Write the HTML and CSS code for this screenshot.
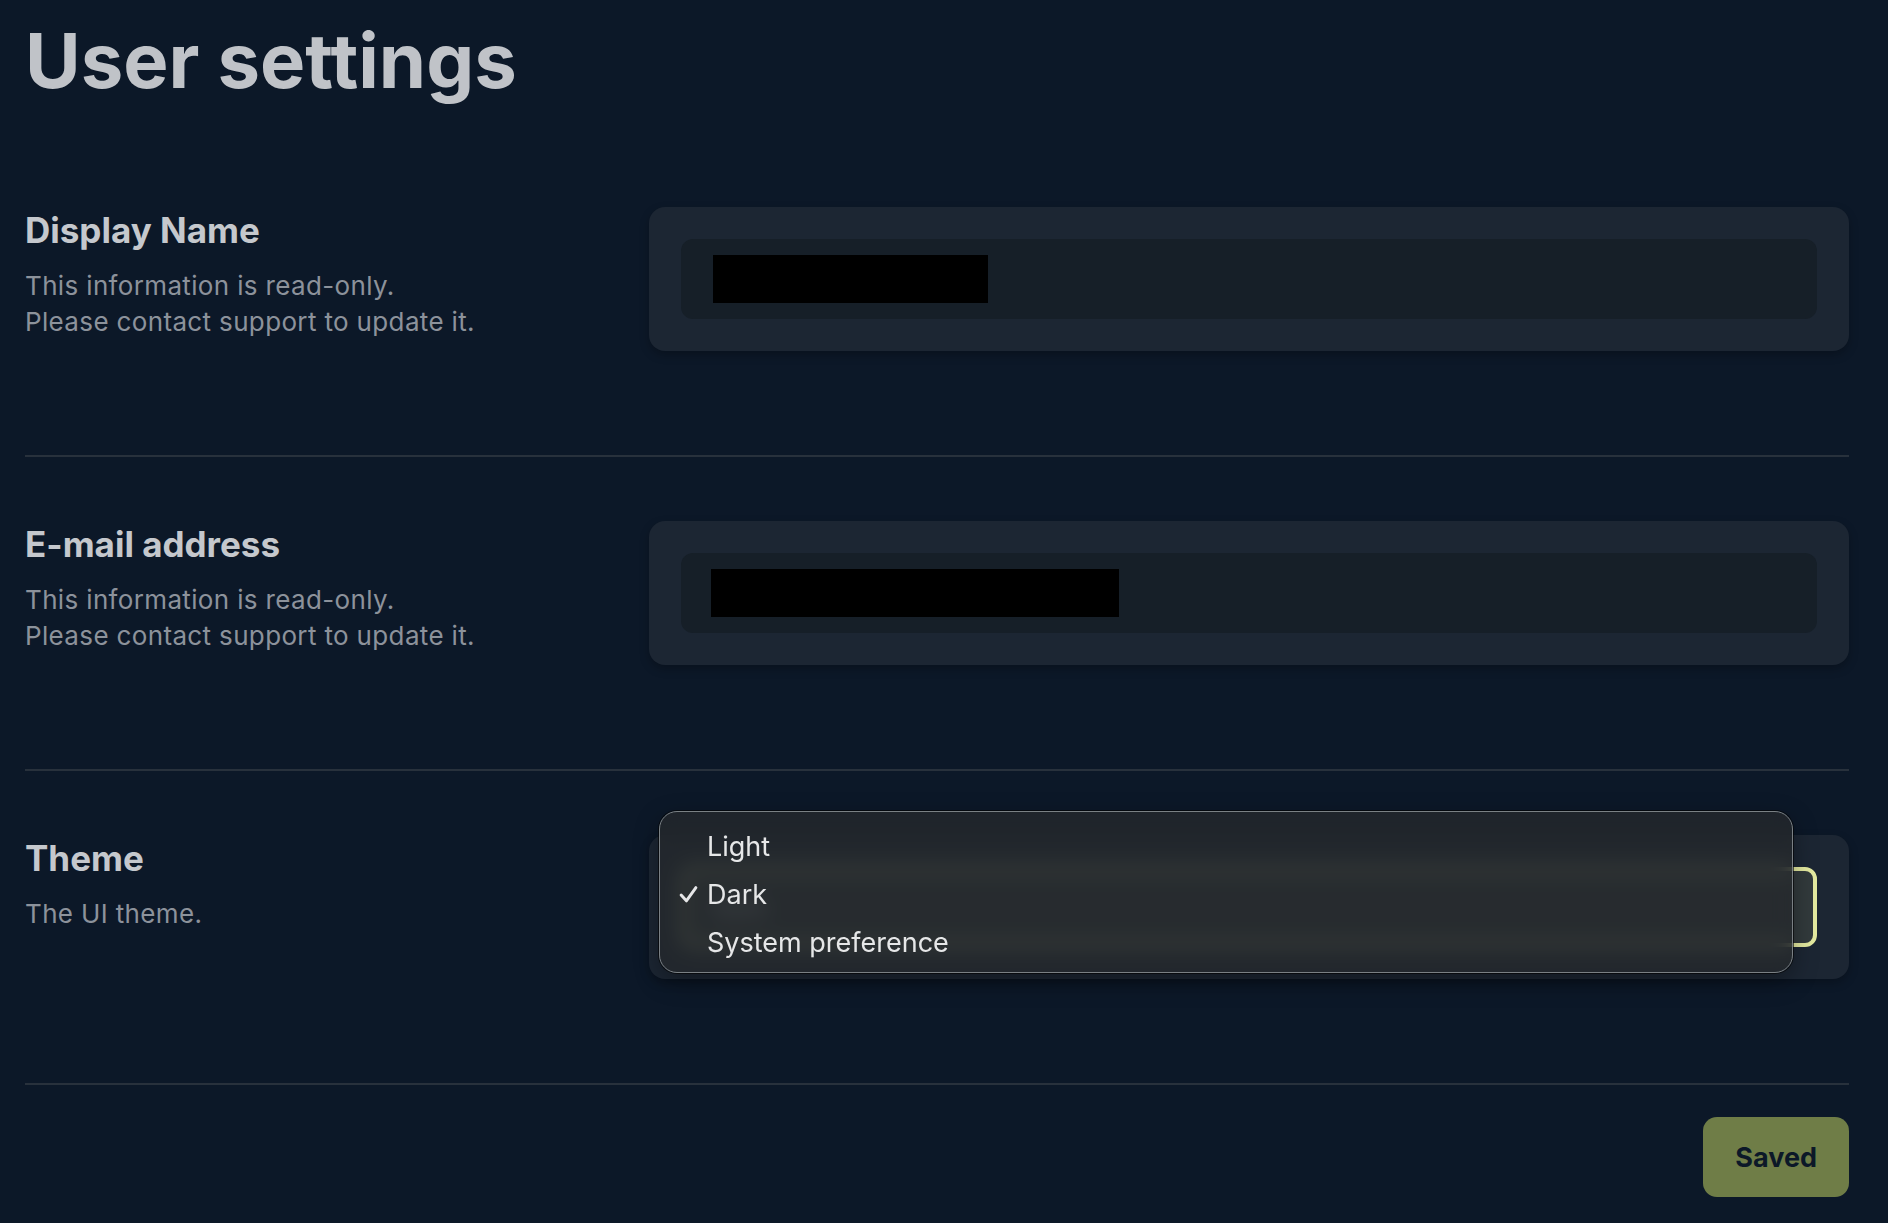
FILE: index.html
```html
<!DOCTYPE html>
<html lang="en">
<head>
  <meta charset="UTF-8">
  <meta name="viewport" content="width=device-width, initial-scale=1.0">
  <title>User settings</title>
  <link rel="stylesheet" href="styles.css">
</head>
<body>

  <div class="page">
    <h1>User settings</h1>

    <!-- Display name -->
    <div class="setting-row">
      <div class="setting-info">
        <h2>Display Name</h2>
        <p>This information is read-only.<br>Please contact support to update it.</p>
      </div>
      <div class="card">
        <div class="field">
          <span class="redacted redacted-name"></span>
        </div>
      </div>
    </div>

    <!-- E-mail -->
    <div class="setting-row">
      <div class="setting-info">
        <h2>E-mail address</h2>
        <p>This information is read-only.<br>Please contact support to update it.</p>
      </div>
      <div class="card">
        <div class="field">
          <span class="redacted redacted-email"></span>
        </div>
      </div>
    </div>

    <!-- Theme -->
    <div class="setting-row">
      <div class="setting-info">
        <h2>Theme</h2>
        <p>The UI theme.</p>
      </div>
      <div class="card card-theme">
        <div class="select">Dark</div>

        <!-- open dropdown -->
        <div class="dropdown">
          <div class="option">Light</div>
          <div class="option">
            <svg class="check" width="19" height="19" viewBox="0 0 18 18">
              <polyline points="2,9.5 7,15 16,2.5" fill="none" stroke="#e6e7e8" stroke-width="2.8" stroke-linecap="round" stroke-linejoin="round"/>
            </svg>
            Dark
          </div>
          <div class="option">System preference</div>
        </div>
      </div>
    </div>

    <div class="footer">
      <button class="save-btn">Saved</button>
    </div>
  </div>

</body>
</html>
```

FILE: styles.css
```css
body {
  margin: 0;
  background-color: #0c1828;
  font-family: Inter, "Noto Sans", sans-serif;
  color: #c4c7cc;
}
.page {
  width: 1824px;
  margin-left: 25px;
}
h1 {
  margin: 0 0 37px;
  padding-top: 15px;
  font-size: 76px;
  line-height: 91px;
  font-weight: 700;
  color: #c0c3c8;
}
.setting-row {
  display: grid;
  grid-template-columns: 600px 1200px;
  gap: 24px;
  padding: 64px 0 104px;
  border-bottom: 2px solid #28313c;
}
.setting-info h2 {
  margin: 2px 0 0;
  font-size: 35px;
  line-height: 42px;
  font-weight: 700;
  color: #c5c8cd;
}
.setting-info p {
  margin: 17px 0 0;
  font-size: 26px;
  line-height: 36px;
  letter-spacing: 0.35px;
  color: #8c929b;
}
.card {
  background-color: #1c2633;
  border-radius: 16px;
  padding: 32px;
  box-shadow: 0 4px 10px rgba(0, 0, 0, 0.25);
}
.field {
  height: 80px;
  display: flex;
  align-items: center;
  padding: 0 32px;
  background-color: #161f28;
  border-radius: 12px;
}
.redacted {
  display: block;
  height: 48px;
  background-color: #000;
}
.redacted-name {
  width: 275px;
}
.redacted-email {
  width: 408px;
  margin-left: -2px;
}
.card-theme {
  position: relative;
}
.select {
  box-sizing: border-box;
  height: 80px;
  display: flex;
  align-items: center;
  padding: 0 28px;
  background-color: #323a3c;
  border: 4px solid #e4eaa0;
  border-radius: 12px;
  font-size: 24px;
  color: #d6d9dc;
}
.dropdown {
  position: absolute;
  left: 10px;
  top: -24px;
  width: 1134px;
  height: 162px;
  box-sizing: border-box;
  padding: 11px 0 7px;
  background-color: rgba(36, 40, 44, 0.8);
  backdrop-filter: blur(10px);
  border: 1.5px solid #7a8084;
  border-radius: 18px;
  box-shadow: 0 0 0 1px rgba(0, 0, 0, 0.6), 0 8px 24px rgba(0, 0, 0, 0.35);
  z-index: 10;
}
.option {
  position: relative;
  height: 48px;
  line-height: 48px;
  padding-left: 47px;
  font-size: 27px;
  color: #e6e7e8;
}
.check {
  position: absolute;
  left: 19px;
  top: 14px;
}
.footer {
  display: flex;
  justify-content: flex-end;
  padding-top: 32px;
}
.save-btn {
  height: 80px;
  padding: 0 32px;
  background-color: #6f7d47;
  color: #0c1828;
  border: none;
  border-radius: 14px;
  font-family: Inter, sans-serif;
  font-size: 27px;
  font-weight: 700;
  cursor: pointer;
}
```
